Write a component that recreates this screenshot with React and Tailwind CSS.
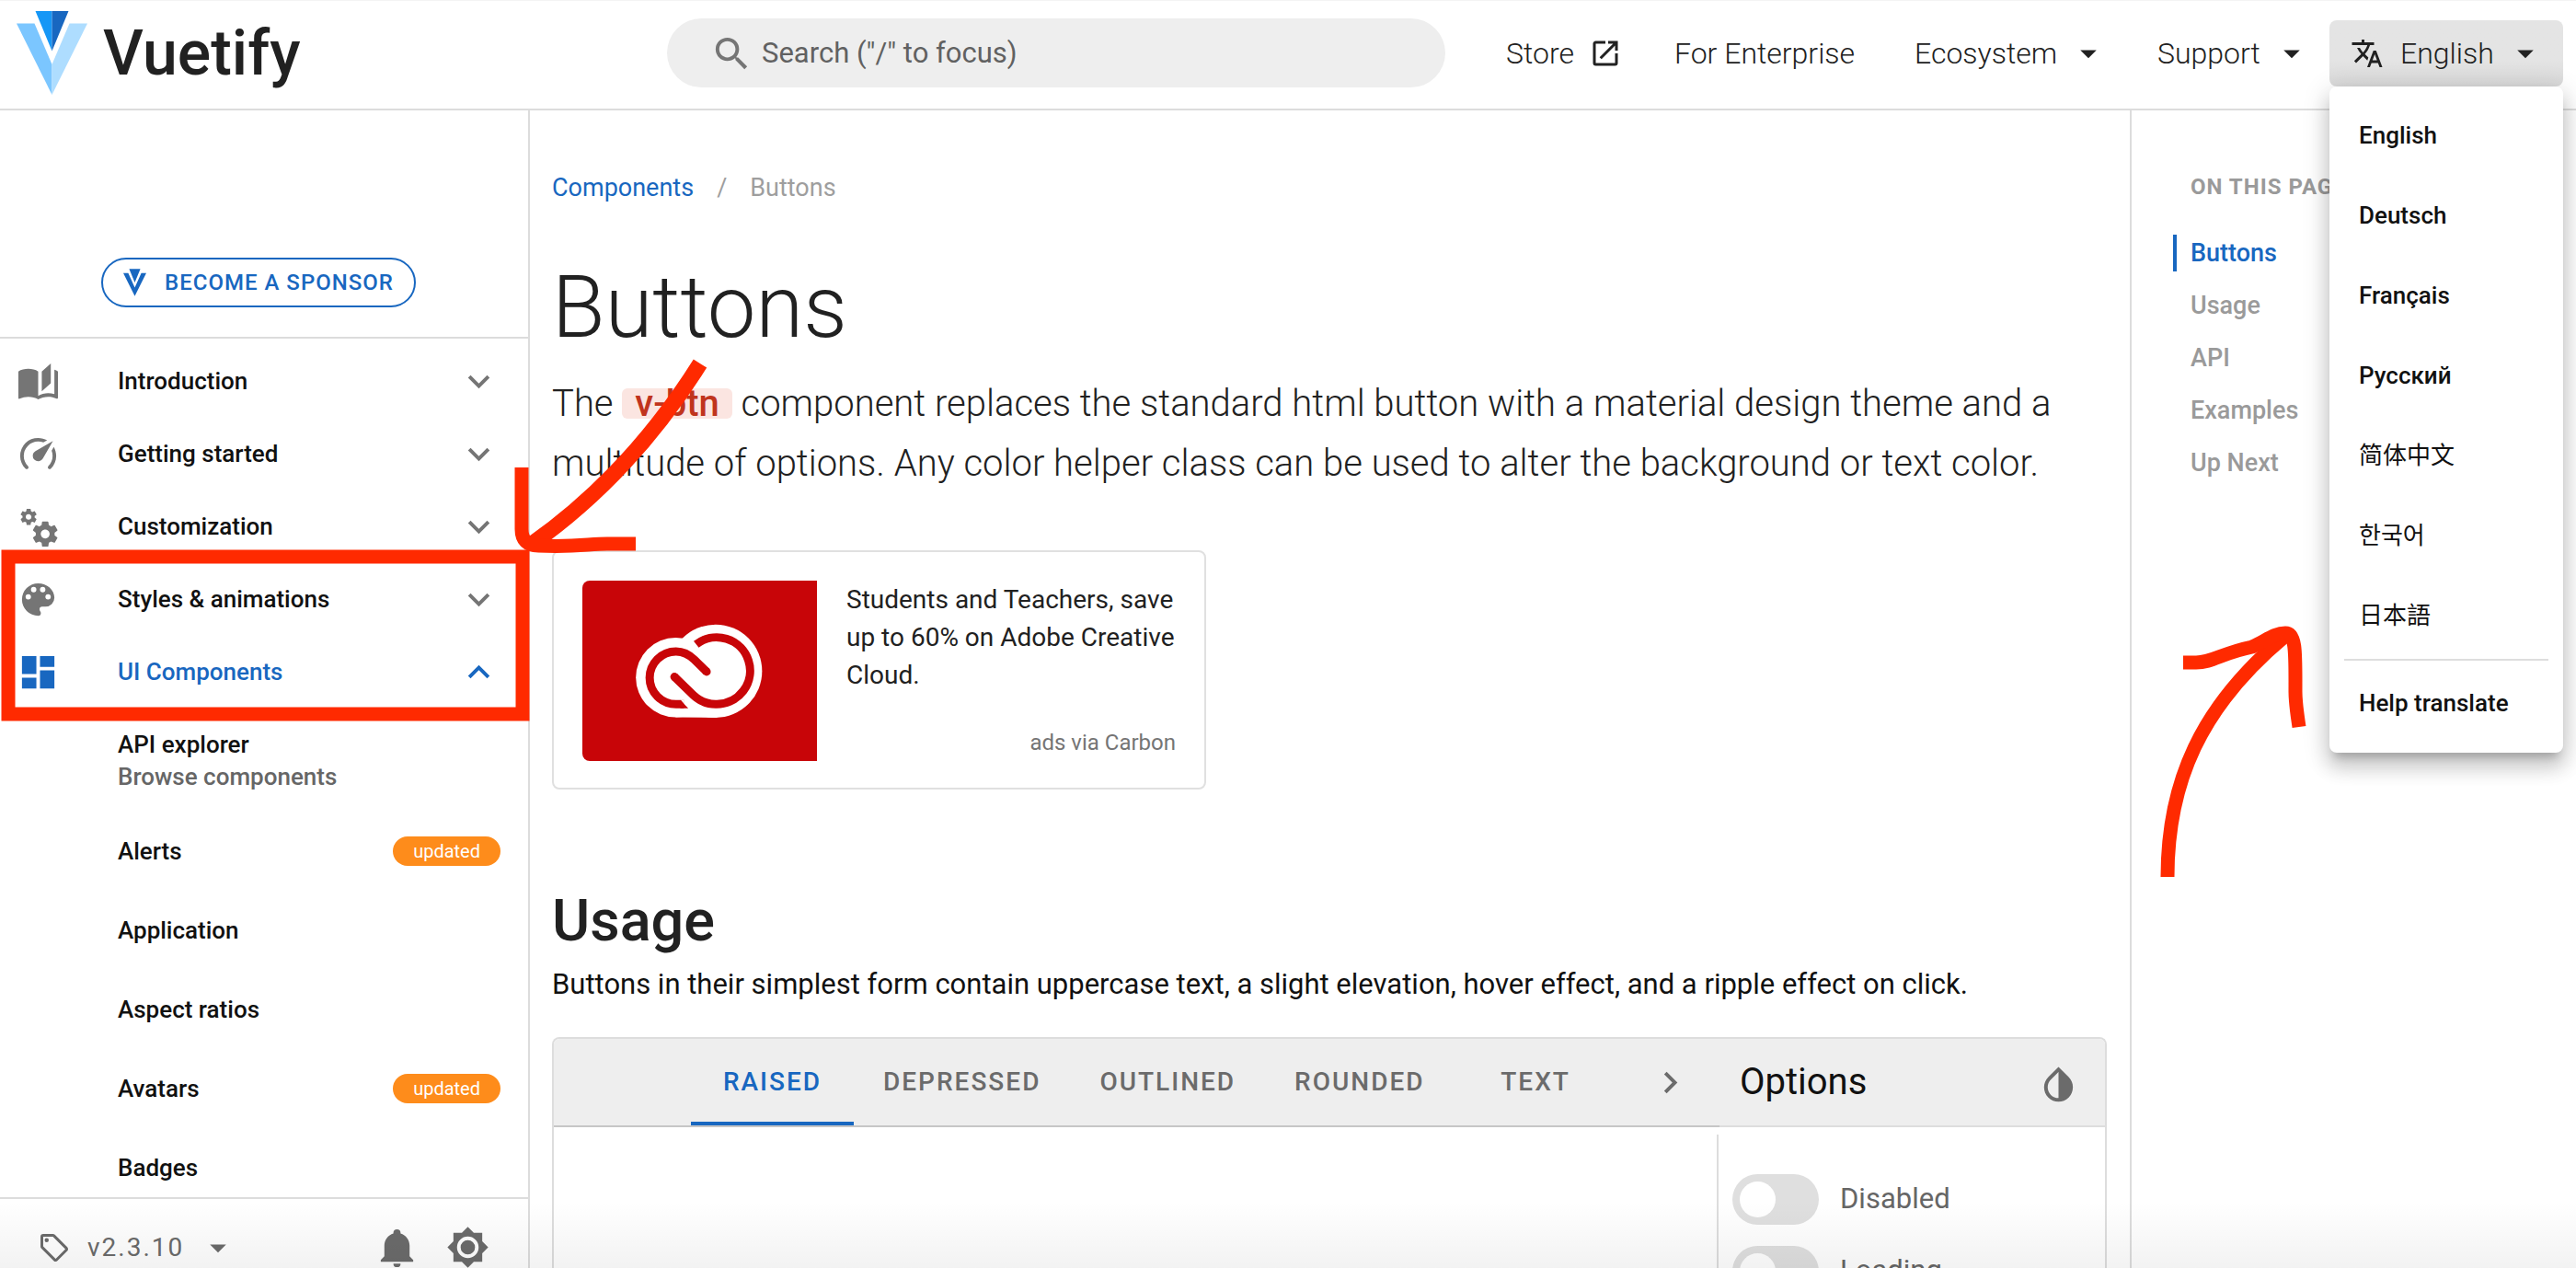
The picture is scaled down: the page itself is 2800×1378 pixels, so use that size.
import React from "react";

const icons = {
  magnify:
    "M9.5,3A6.5,6.5 0 0,1 16,9.5C16,11.11 15.41,12.59 14.44,13.73L14.71,14H15.5L20.5,19L19,20.5L14,15.5V14.71L13.73,14.44C12.59,15.41 11.11,16 9.5,16A6.5,6.5 0 0,1 3,9.5A6.5,6.5 0 0,1 9.5,3M9.5,5C7,5 5,7 5,9.5C5,12 7,14 9.5,14C12,14 14,12 14,9.5C14,7 12,5 9.5,5Z",
  openInNew:
    "M14,3V5H17.59L7.76,14.83L9.17,16.24L19,6.41V10H21V3M19,19H5V5H12V3H5C3.89,3 3,3.9 3,5V19A2,2 0 0,0 5,21H19A2,2 0 0,0 21,19V12H19V19Z",
  menuDown: "M7,10L12,15L17,10H7Z",
  translate:
    "M12.87,15.07L10.33,12.56L10.36,12.53C12.1,10.59 13.34,8.36 14.07,6H17V4H10V2H8V4H1V6H12.17C11.5,7.92 10.44,9.75 9,11.35C8.07,10.32 7.3,9.19 6.69,8H4.69C5.42,9.63 6.42,11.17 7.67,12.56L2.58,17.58L4,19L9,14L12.11,17.11L12.87,15.07M18.5,10H16.5L12,22H14L15.12,19H19.87L21,22H23L18.5,10M15.88,17L17.5,12.67L19.12,17H15.88Z",
  book:
    "M19 2L14 6.5V17.5L19 13V2M6.5 5C4.55 5 2.45 5.4 1 6.5V21.16C1 21.41 1.25 21.66 1.5 21.66C1.6 21.66 1.65 21.59 1.75 21.59C3.1 20.94 5.05 20.5 6.5 20.5C8.45 20.5 10.55 20.9 12 22C13.35 21.15 15.8 20.5 17.5 20.5C19.15 20.5 20.85 20.81 22.25 21.56C22.35 21.61 22.4 21.59 22.5 21.59C22.75 21.59 23 21.34 23 21.09V6.5C22.4 6.05 21.75 5.75 21 5.5V19C19.9 18.65 18.7 18.5 17.5 18.5C15.8 18.5 13.35 19.15 12 20V6.5C10.55 5.4 8.45 5 6.5 5Z",
  speedometer:
    "M12,16A3,3 0 0,1 9,13C9,11.88 9.61,10.9 10.5,10.39L20.21,4.77L14.68,14.35C14.18,15.33 13.17,16 12,16M12,3C13.81,3 15.5,3.5 16.97,4.32L14.87,5.53C14,5.19 13,5 12,5A8,8 0 0,0 4,13C4,15.21 4.89,17.21 6.34,18.65H6.35C6.74,19.04 6.74,19.67 6.35,20.06C5.96,20.45 5.32,20.45 4.93,20.07V20.07C3.12,18.26 2,15.76 2,13A10,10 0 0,1 12,3M22,13C22,15.76 20.88,18.26 19.07,20.07V20.07C18.68,20.45 18.05,20.45 17.66,20.06C17.27,19.67 17.27,19.04 17.66,18.65V18.65C19.11,17.2 20,15.21 20,13C20,12 19.81,11 19.46,10.1L20.67,8C21.5,9.5 22,11.18 22,13Z",
  cogs:
    "M15.9,18.45C17.25,18.45 18.35,17.35 18.35,16C18.35,14.65 17.25,13.55 15.9,13.55C14.54,13.55 13.45,14.65 13.45,16C13.45,17.35 14.54,18.45 15.9,18.45M21.1,16.68L22.58,17.84C22.71,17.95 22.75,18.13 22.66,18.29L21.26,20.71C21.17,20.86 21,20.92 20.83,20.86L19.09,20.16C18.73,20.44 18.33,20.67 17.91,20.85L17.64,22.7C17.62,22.87 17.47,23 17.3,23H14.5C14.32,23 14.18,22.87 14.15,22.7L13.89,20.85C13.46,20.67 13.07,20.44 12.71,20.16L10.96,20.86C10.81,20.92 10.62,20.86 10.54,20.71L9.14,18.29C9.05,18.13 9.09,17.95 9.22,17.84L10.7,16.68L10.65,16L10.7,15.31L9.22,14.16C9.09,14.05 9.05,13.86 9.14,13.71L10.54,11.29C10.62,11.13 10.81,11.07 10.96,11.13L12.71,11.84C13.07,11.56 13.46,11.32 13.89,11.15L14.15,9.29C14.18,9.13 14.32,9 14.5,9H17.3C17.47,9 17.62,9.13 17.64,9.29L17.91,11.15C18.33,11.32 18.73,11.56 19.09,11.84L20.83,11.13C21,11.07 21.17,11.13 21.26,11.29L22.66,13.71C22.75,13.86 22.71,14.05 22.58,14.16L21.1,15.31L21.15,16L21.1,16.68M6.69,8.07C7.56,8.07 8.26,7.37 8.26,6.5C8.26,5.63 7.56,4.92 6.69,4.92A1.58,1.58 0 0,0 5.11,6.5C5.11,7.37 5.82,8.07 6.69,8.07M10.03,6.94L11,7.68C11.07,7.75 11.09,7.87 11.03,7.97L10.13,9.53C10.08,9.63 9.96,9.67 9.86,9.63L8.74,9.18L8,9.62L7.81,10.81C7.79,10.92 7.7,11 7.59,11H5.79C5.67,11 5.58,10.92 5.56,10.81L5.4,9.62L4.64,9.18L3.52,9.63C3.41,9.67 3.3,9.63 3.24,9.53L2.34,7.97C2.28,7.87 2.31,7.75 2.39,7.68L3.34,6.94L3.31,6.5L3.34,6.06L2.39,5.32C2.31,5.25 2.28,5.13 2.34,5.03L3.24,3.47C3.3,3.37 3.41,3.33 3.52,3.37L4.63,3.82L5.4,3.38L5.56,2.19C5.58,2.08 5.67,2 5.79,2H7.59C7.7,2 7.79,2.08 7.81,2.19L8,3.38L8.74,3.82L9.86,3.37C9.96,3.33 10.08,3.37 10.13,3.47L11.03,5.03C11.09,5.13 11.07,5.25 11,5.32L10.03,6.06L10.06,6.5L10.03,6.94Z",
  palette:
    "M17.5,12A1.5,1.5 0 0,1 16,10.5A1.5,1.5 0 0,1 17.5,9A1.5,1.5 0 0,1 19,10.5A1.5,1.5 0 0,1 17.5,12M14.5,8A1.5,1.5 0 0,1 13,6.5A1.5,1.5 0 0,1 14.5,5A1.5,1.5 0 0,1 16,6.5A1.5,1.5 0 0,1 14.5,8M9.5,8A1.5,1.5 0 0,1 8,6.5A1.5,1.5 0 0,1 9.5,5A1.5,1.5 0 0,1 11,6.5A1.5,1.5 0 0,1 9.5,8M6.5,12A1.5,1.5 0 0,1 5,10.5A1.5,1.5 0 0,1 6.5,9A1.5,1.5 0 0,1 8,10.5A1.5,1.5 0 0,1 6.5,12M12,3A9,9 0 0,0 3,12A9,9 0 0,0 12,21A1.5,1.5 0 0,0 13.5,19.5C13.5,19.11 13.35,18.76 13.11,18.5C12.88,18.23 12.73,17.88 12.73,17.5A1.5,1.5 0 0,1 14.23,16H16A5,5 0 0,0 21,11C21,6.58 16.97,3 12,3Z",
  dashboard: "M13,3V9H21V3M13,21H21V11H13M3,21H11V15H3M3,13H11V3H3V13Z",
  chevronDown: "M7.41,8.58L12,13.17L16.59,8.58L18,10L12,16L6,10L7.41,8.58Z",
  chevronUp: "M7.41,15.41L12,10.83L16.59,15.41L18,14L12,8L6,14L7.41,15.41Z",
  chevronRight: "M8.59,16.58L13.17,12L8.59,7.41L10,6L16,12L10,18L8.59,16.58Z",
  bell:
    "M21,19V20H3V19L5,17V11C5,7.9 7.03,5.17 10,4.29C10,4.19 10,4.1 10,4A2,2 0 0,1 12,2A2,2 0 0,1 14,4C14,4.1 14,4.19 14,4.29C16.97,5.17 19,7.9 19,11V17L21,19M14,21A2,2 0 0,1 12,23A2,2 0 0,1 10,21",
  brightness:
    "M12,8A4,4 0 0,0 8,12A4,4 0 0,0 12,16A4,4 0 0,0 16,12A4,4 0 0,0 12,8M12,18A6,6 0 0,1 6,12A6,6 0 0,1 12,6A6,6 0 0,1 18,12A6,6 0 0,1 12,18M20,8.69V4H15.31L12,0.69L8.69,4H4V8.69L0.69,12L4,15.31V20H8.69L12,23.31L15.31,20H20V15.31L23.31,12L20,8.69Z",
  tag:
    "M21.41,11.58L12.41,2.58C12.05,2.22 11.55,2 11,2H4A2,2 0 0,0 2,4V11C2,11.55 2.22,12.05 2.59,12.42L11.59,21.42C11.95,21.78 12.45,22 13,22C13.55,22 14.05,21.78 14.41,21.41L21.41,14.41C21.78,14.05 22,13.55 22,13C22,12.44 21.77,11.94 21.41,11.58M13,20L4,11V4H11L20,13M6.5,5A1.5,1.5 0 0,1 8,6.5A1.5,1.5 0 0,1 6.5,8A1.5,1.5 0 0,1 5,6.5A1.5,1.5 0 0,1 6.5,5Z",
  invert:
    "M12,19.58V19.58C10.4,19.58 8.89,18.96 7.76,17.83C6.62,16.69 6,15.19 6,13.58C6,12 6.62,10.47 7.76,9.34L12,5.1M17.66,7.93L12,2.27V2.27L6.34,7.93C3.22,11.05 3.22,16.12 6.34,19.24C7.9,20.8 9.95,21.58 12,21.58C14.05,21.58 16.1,20.8 17.66,19.24C20.78,16.12 20.78,11.05 17.66,7.93Z",
};

function Icon({ name, className = "size-[47px]" }) {
  return (
    <svg viewBox="0 0 24 24" className={`shrink-0 ${className}`} fill="currentColor" aria-hidden="true">
      <path d={icons[name]} />
    </svg>
  );
}

function VuetifyLogo() {
  return (
    <svg viewBox="0 0 77 91" className="h-[91px] w-[77px] shrink-0" aria-hidden="true">
      <path d="M0 13.500H19.500L38.500 58V91Z" fill="#7bc6ff" />
      <path d="M77 13.500H57.500L38.500 58V91Z" fill="#aeddff" />
      <path d="M20.500 0H38.500V43.500Z" fill="#1697f6" />
      <path d="M56.500 0H38.500V43.500Z" fill="#1867c0" />
    </svg>
  );
}

function SponsorMark() {
  return (
    <svg viewBox="0 0 74 88" className="h-[30px] w-[25px]" fill="currentColor" aria-hidden="true">
      <path d="M0 14H16L37 60L58 14H74L37 88Z" />
      <path d="M19 0H55L37 44Z" />
    </svg>
  );
}

function CreativeCloudArt() {
  return (
    <svg
      viewBox="0 0 255 196"
      className="h-[196px] w-[255px] shrink-0 rounded-l-lg bg-[#c80508]"
      role="img"
      aria-label="Adobe Creative Cloud"
    >
      <g transform="translate(46.500 30) scale(0.333)">
        <circle cx="165" cy="226" r="130" fill="#fff" />
        <circle cx="295" cy="205" r="152" fill="#fff" />
        <path d="M165 200H300V357L165 356Z" fill="#fff" />
        <g fill="none" stroke="#c80508" strokeWidth="27">
          <path d="M232 118A109 109 0 1 1 295 313C265 313 242 302 222 283L161 224" />
          <path d="M192 313H166A86 86 0 1 1 166 141C192 141 210 152 226 168L266 207" />
        </g>
        <g fill="#c80508">
          <circle cx="161" cy="224" r="13.500" />
          <circle cx="266" cy="207" r="13.500" />
          <path d="M180 299.500L206 326.500H180Z" />
        </g>
        <path d="M181 299L193 299V312Z" fill="#fff" />
      </g>
    </svg>
  );
}

const groups = [
  { title: "Introduction", icon: "book" },
  { title: "Getting started", icon: "speedometer" },
  { title: "Customization", icon: "cogs" },
  { title: "Styles & animations", icon: "palette" },
  { title: "UI Components", icon: "dashboard", open: true },
];

const pages = [
  { title: "Alerts", updated: true },
  { title: "Application" },
  { title: "Aspect ratios" },
  { title: "Avatars", updated: true },
  { title: "Badges" },
];

const languages = ["English", "Deutsch", "Français", "Русский", "简体中文", "한국어", "日本語"];
const tabs = ["Raised", "Depressed", "Outlined", "Rounded", "Text"];
const toc = ["Buttons", "Usage", "API", "Examples", "Up Next"];

function Header() {
  return (
    <header className="flex h-[120px] shrink-0 items-center border-t border-b-2 border-t-[#f4f4f4] border-b-[#dcdcdc] pr-[14px] pb-[4px]">
      <a href="#home" className="flex w-[725px] shrink-0 items-center gap-[17px] pl-[18px]">
        <VuetifyLogo />
        <span className="text-[68px] leading-[80px] font-medium text-[#212121]">Vuetify</span>
      </a>
      <label className="flex h-[75px] flex-1 items-center gap-[9px] rounded-full bg-[#eeeeee] pt-[2px] pr-8 pl-[47px] text-[#757575]">
        <Icon name="magnify" />
        <input
          type="text"
          aria-label="Search"
          placeholder={'Search ("/" to focus)'}
          className="min-w-0 flex-1 bg-transparent text-[31px] outline-none placeholder:text-[#616161]"
        />
      </label>
      <nav className="flex shrink-0 items-center pl-[66px] text-[32px] font-light text-[#212121]">
        <a href="#store" className="flex w-[183px] items-center gap-[16px]">
          Store
          <Icon name="openInNew" className="size-[36px]" />
        </a>
        <a href="#enterprise" className="w-[261px]">For Enterprise</a>
        <button type="button" className="flex w-[264px] items-center gap-[13px]">
          Ecosystem
          <Icon name="menuDown" className="size-[42px]" />
        </button>
        <button type="button" className="flex w-[187px] items-center gap-[13px]">
          Support
          <Icon name="menuDown" className="size-[42px]" />
        </button>
        <div className="relative">
          <button
            type="button"
            aria-expanded="true"
            className="flex h-[72px] w-[254px] items-center rounded-lg bg-linear-to-b from-[#e4e4e4] from-60% to-[#d9d9d9] pl-[23px]"
          >
            <Icon name="translate" className="size-[36px]" />
            <span className="ml-[18px]">English</span>
            <Icon name="menuDown" className="ml-[13px] size-[42px]" />
          </button>
          <ul className="absolute top-full left-0 z-20 w-full rounded-lg bg-white py-[10px] font-['Roboto','Noto_Sans_CJK_SC','Noto_Sans_CJK_KR',sans-serif] text-[26px] font-medium text-[#111111] shadow-[0_10px_10px_-6px_rgba(0,0,0,0.2),0_16px_20px_2px_rgba(0,0,0,0.14),0_6px_28px_4px_rgba(0,0,0,0.12)]">
            {languages.map((language, index) => (
              <li key={language}>
                <a
                  href="#language"
                  className={`flex h-[87px] items-center pl-8 ${index > 3 ? "font-normal" : ""}`}
                >
                  {language}
                </a>
              </li>
            ))}
            <li className="mx-4 my-[3px] border-t-2 border-[#dedede]" />
            <li>
              <a href="#translate" className="flex h-[87px] items-center pl-8">Help translate</a>
            </li>
          </ul>
        </div>
      </nav>
    </header>
  );
}

function Sidebar() {
  return (
    <aside className="flex w-[576px] shrink-0 flex-col border-r-2 border-[#dcdcdc]">
      <div className="flex justify-center border-b-2 border-[#dcdcdc] pt-[160px] pr-[12px] pb-[32px]">
        <a
          href="#sponsor"
          className="flex h-[54px] items-center gap-[20px] rounded-full border-2 border-[#1867c0] px-[22px] text-[24px] font-medium tracking-[1px] text-[#1867c0]"
        >
          <SponsorMark />
          BECOME A SPONSOR
        </a>
      </div>
      <nav className="min-h-0 flex-1 overflow-hidden pt-[7px] text-[26px] font-medium text-[#111111]">
        {groups.map(({ title, icon, open }) => (
          <button
            key={title}
            type="button"
            aria-expanded={Boolean(open)}
            className={`flex h-[79px] w-full items-center pr-[30px] pl-[18px] ${open ? "text-[#1867c0]" : ""}`}
          >
            <Icon name={icon} className={`size-[47px] ${open ? "" : "text-[#757575]"}`} />
            <span className="ml-[63px] flex-1 text-left">{title}</span>
            <Icon
              name={open ? "chevronUp" : "chevronDown"}
              className={`size-[47px] ${open ? "" : "text-[#757575]"}`}
            />
          </button>
        ))}
        <a href="#api" className="block pt-[22px] pb-[20px] pl-[128px] leading-[35px]">
          API explorer
          <span className="block text-[#666666]">Browse components</span>
        </a>
        {pages.map(({ title, updated }) => (
          <a key={title} href="#page" className="flex h-[86px] items-center justify-between pr-[30px] pl-[128px]">
            {title}
            {updated && (
              <span className="flex h-[32px] items-center rounded-full bg-[#fe8c1b] px-[22px] text-[20px] font-normal text-white">
                updated
              </span>
            )}
          </a>
        ))}
      </nav>
      <div className="flex h-[77px] shrink-0 items-center border-t-2 border-[#dcdcdc] pt-[30px] pr-[42px] pl-[41px] text-[#6b6b6b]">
        <button type="button" className="flex flex-1 items-center text-[28px] tracking-[2px]">
          <Icon name="tag" className="size-[36px]" />
          <span className="ml-[18px]">v2.3.10</span>
          <Icon name="menuDown" className="ml-[16px] size-[42px]" />
        </button>
        <button type="button" aria-label="Notifications">
          <Icon name="bell" />
        </button>
        <button type="button" aria-label="Settings" className="ml-[30px]">
          <Icon name="brightness" />
        </button>
      </div>
    </aside>
  );
}

function AdCard() {
  return (
    <a href="#ad" className="mt-[62px] flex h-[260px] w-[711px] rounded-lg border-2 border-[#e0e0e0] p-[31px]">
      <CreativeCloudArt />
      <span className="ml-[32px] flex flex-1 flex-col justify-between text-[28px] leading-[41px] text-[#212121]">
        <span>Students and Teachers, save up to 60% on Adobe Creative Cloud.</span>
        <span className="text-right text-[24px] leading-[35px] text-[#757575]">ads via Carbon</span>
      </span>
    </a>
  );
}

function Toggle({ label }) {
  return (
    <label className="flex h-[78px] items-center gap-[23px] text-[31px] text-[#666666]">
      <input
        type="checkbox"
        className="h-[55px] w-[94px] appearance-none rounded-full bg-[#dfdfdf] p-[8px] before:block before:size-[39px] before:rounded-full before:bg-white"
      />
      {label}
    </label>
  );
}

function Playground() {
  return (
    <div className="mt-[32px] flex min-h-0 flex-1 flex-col rounded-t-lg border-2 border-b-0 border-[#dddddd]">
      <div className="flex h-[96px] shrink-0 rounded-t-md bg-[#eeeeee]">
        <div className="flex flex-1 items-stretch border-b-2 border-[#c6c6c6] pl-[149px]">
          {tabs.map((tab, index) => (
            <button
              key={tab}
              type="button"
              className={`min-w-[177px] border-b-4 px-[32px] pt-[4px] text-[28px] font-medium tracking-[2px] uppercase ${
                index === 0 ? "border-[#1867c0] text-[#1867c0]" : "border-transparent text-[#6b6b6b]"
              }`}
            >
              {tab}
            </button>
          ))}
          <button type="button" aria-label="Next tabs" className="ml-auto pr-[30px] text-[#6b6b6b]">
            <Icon name="chevronRight" />
          </button>
        </div>
        <div className="flex w-[419px] items-center justify-between border-b-2 border-[#dddddd] pr-[27px] pl-[22px] text-[40px] text-[#111111]">
          Options
          <button type="button" aria-label="Invert colors" className="pt-[4px] text-[#6b6b6b]">
            <Icon name="invert" />
          </button>
        </div>
      </div>
      <div className="flex min-h-0 flex-1 overflow-hidden pt-[8px]">
        <div className="flex-1" />
        <div className="w-[422px] border-l-2 border-[#dddddd] pt-[31px] pl-[15px]">
          <Toggle label="Disabled" />
          <Toggle label="Loading" />
        </div>
      </div>
    </div>
  );
}

function Content() {
  return (
    <main className="flex min-w-0 flex-1 flex-col overflow-hidden pt-[64px] pr-[25px] pl-[24px]">
      <nav aria-label="Breadcrumb" className="flex text-[27px] leading-[40px] text-[#9e9e9e]">
        <a href="#components" className="text-[#1867c0]">Components</a>
        <span className="px-[25px]">/</span>
        <span>Buttons</span>
      </nav>
      <h1 className="mt-[50px] text-[94px] leading-[120px] font-light text-[#212121]">Buttons</h1>
      <p className="mt-[12px] text-[40px] leading-[65px] font-light text-[#212121]">
        The{" "}
        <code className="inline-block rounded-md bg-[#fbe5e1] px-[14px] font-['Roboto',sans-serif] leading-[33px] font-medium text-[#c0341d]">
          v-btn
        </code>{" "}
        component replaces the standard html button with a material design theme and a multitude of options. Any
        color helper class can be used to alter the background or text color.
      </p>
      <AdCard />
      <h2 className="mt-[103px] text-[63px] leading-[80px] font-medium text-[#212121]">Usage</h2>
      <p className="mt-[4px] text-[31px] leading-[50px] text-[#111111]">
        Buttons in their simplest form contain uppercase text, a slight elevation, hover effect, and a ripple effect on
        click.
      </p>
      <Playground />
    </main>
  );
}

function TableOfContents() {
  return (
    <aside className="w-[485px] shrink-0 overflow-hidden border-l-2 border-[#dcdcdc] pt-[63px] pl-[45px] font-medium text-[#9a9a9a]">
      <h2 className="pl-[19px] text-[24px] leading-[40px] font-bold tracking-[1px]">ON THIS PAGE</h2>
      <ul className="mt-[32px] flex flex-col gap-[17px] text-[27px]">
        {toc.map((entry, index) => (
          <li key={entry}>
            <a
              href="#section"
              className={`block h-[40px] border-l-4 pl-[15px] leading-[40px] ${
                index === 0 ? "border-[#1867c0] text-[#1867c0]" : "border-transparent"
              }`}
            >
              {entry}
            </a>
          </li>
        ))}
      </ul>
    </aside>
  );
}

/* Hand-drawn markers floating over the page. */
function Annotations() {
  return (
    <>
      <svg
        viewBox="0 0 800 400"
        className="pointer-events-none absolute top-[390px] left-0 z-10 h-[400px] w-[800px]"
        fill="none"
        stroke="#ff2a00"
        strokeWidth="15"
        aria-hidden="true"
      >
        <rect x="9" y="215" width="559" height="171" />
        <path d="M761 5Q685 126 577 202" strokeWidth="17" />
        <path d="M567 118V185Q567 203 585 203C625 205 640 201 660 201H691" />
      </svg>
      <svg
        viewBox="0 0 160 280"
        className="pointer-events-none absolute top-[680px] right-[290px] z-30 h-[280px] w-[160px] overflow-visible"
        fill="none"
        stroke="#ff2a00"
        strokeWidth="15"
        aria-hidden="true"
      >
        <path d="M6 273C6 170 42 88 133 12" />
        <path d="M23 40H37C55 40 64 30 98 23C112 17 122 8 134 8C146 8 145 30 145 72C145 84 147 96 149 110" />
      </svg>
    </>
  );
}

export default function App() {
  return (
    <div className="relative flex h-screen flex-col overflow-hidden bg-white font-['Roboto',sans-serif]">
      <Header />
      <div className="flex min-h-0 flex-1">
        <Sidebar />
        <Content />
        <TableOfContents />
      </div>
      <div className="pointer-events-none absolute inset-x-0 bottom-0 h-[72px] bg-linear-to-b from-transparent to-black/5" />
      <Annotations />
    </div>
  );
}
